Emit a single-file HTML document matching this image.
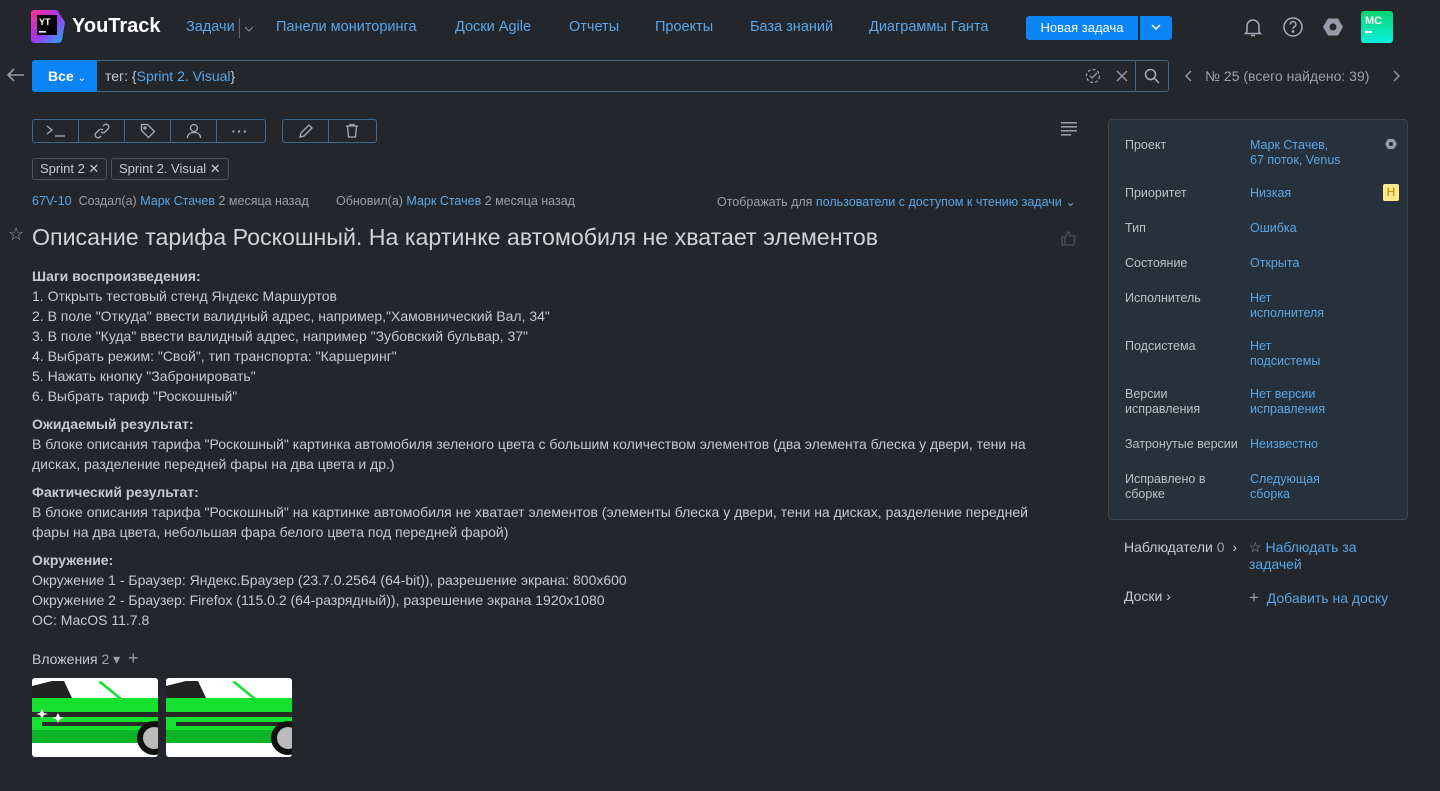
<!DOCTYPE html>
<html><head><meta charset="utf-8"><style>
*{box-sizing:border-box;margin:0;padding:0}
body{width:1440px;height:791px;background:#23272c;font-family:"Liberation Sans",Arial,sans-serif;color:#c6c9cd;font-size:14px;position:relative;overflow:hidden}
.a{position:absolute;white-space:nowrap}
.l{color:#5aa6e6}
.g{color:#9aa0a7}
.nav{font-size:14.5px;color:#5aa6e6;top:19px}
.btnb{border:1px solid #3f6a8e;height:24px;top:119px;display:flex;border-radius:3px}
.btnb div{width:46px;border-right:1px solid #3f6a8e;display:flex;align-items:center;justify-content:center}
.btnb div:last-child{border-right:none}
.tag{top:158px;height:22px;border:1px solid #4a525b;border-radius:3px;font-size:13px;padding:2px 7px;color:#c6c9cd}
.desc{left:32px;top:266px;font-size:14px;line-height:20px;color:#c6c9cd;white-space:normal;width:1042px}
.desc b{font-weight:bold;color:#c6c9cd}
.desc p{margin-bottom:6px}
.panel{left:1108px;top:119px;width:300px;height:401px;background:#26313b;border:1px solid #3a4652;border-radius:4px}
.fl{left:1125px;font-size:12.5px;color:#bcc0c4;line-height:15px}
.fv{left:1250px;font-size:12.5px;color:#5aa6e6;line-height:15px}
</style></head><body>
<svg class="a" style="left:31px;top:10px" width="34" height="33" viewBox="0 0 34 33">
<defs><linearGradient id="lg" x1="0" y1="0" x2="1" y2="1"><stop offset="0" stop-color="#ff318c"/><stop offset=".5" stop-color="#a435f0"/><stop offset="1" stop-color="#17b4f5"/></linearGradient></defs>
<path d="M0 3Q0 0 4 0h22l8 12-3 18q-1 3-4 3H4q-4 0-4-4z" fill="url(#lg)"/>
<rect x="6" y="5" width="20" height="20" fill="#000"/>
<text x="8" y="15" fill="#fff" font-size="9" font-family="Liberation Sans" font-weight="bold">YT</text>
<rect x="8" y="21" width="7" height="1.6" fill="#fff"/>
</svg>
<div class="a" style="left:72px;top:15px;font-size:20px;font-weight:bold;color:#fff">YouTrack</div>
<div class="a nav" style="left:186px">Задачи</div>
<div class="a" style="left:239px;top:18px;width:1px;height:20px;background:#667"></div>
<svg class="a" style="left:244px;top:26px" width="10" height="6"><path d="M1 1l4 4 4-4" stroke="#889" fill="none"/></svg>
<div class="a nav" style="left:276px">Панели мониторинга</div>
<div class="a nav" style="left:455px">Доски Agile</div>
<div class="a nav" style="left:569px">Отчеты</div>
<div class="a nav" style="left:655px">Проекты</div>
<div class="a nav" style="left:750px">База знаний</div>
<div class="a nav" style="left:869px">Диаграммы Ганта</div>
<div class="a" style="left:1026px;top:16px;width:112px;height:24px;background:#0b84f5;border-radius:3px 0 0 3px;color:#fff;font-size:13px;text-align:center;line-height:24px">Новая задача</div>
<div class="a" style="left:1140px;top:16px;width:32px;height:24px;background:#0b84f5;border-radius:0 3px 3px 0"></div>
<svg class="a" style="left:1151px;top:24px" width="10" height="6"><path d="M1 1l4 4 4-4" stroke="#fff" stroke-width="1.5" fill="none"/></svg>
<svg class="a" style="left:1242px;top:16px" width="22" height="22" viewBox="0 0 22 22" fill="none" stroke="#aab" stroke-width="1.5"><path d="M5 16V10a6 6 0 0112 0v6l1.5 1.5h-15z"/><path d="M9 19.5h4"/></svg>
<svg class="a" style="left:1282px;top:16px" width="22" height="22" viewBox="0 0 22 22" fill="none" stroke="#aab" stroke-width="1.5"><circle cx="11" cy="11" r="9"/><path d="M8.3 8.5a2.8 2.8 0 115 1.6c-1 .8-2.3 1.3-2.3 2.8"/><circle cx="11" cy="15.5" r=".6" fill="#aab"/></svg>
<svg class="a" style="left:1322px;top:16px" width="22" height="22" viewBox="0 0 22 22"><path d="M6 2.5h10l5 8.5-5 8.5H6L1 11z" fill="#99a"/><circle cx="11" cy="11" r="3.5" fill="#23272c"/></svg>
<div class="a" style="left:1361px;top:11px;width:32px;height:32px;border-radius:3px;background:linear-gradient(#0ad56c,#06f0e0);color:#fff;font-size:11px;font-weight:bold;padding:4px 4px">MC<div style="width:7px;height:1.5px;background:#fff;margin-top:4px"></div></div>

<svg class="a" style="left:7px;top:68px" width="18" height="14"><path d="M17 7H2M7 1L1 7l6 6" stroke="#99a" stroke-width="1.6" fill="none"/></svg>
<div class="a" style="left:32px;top:60px;width:1137px;height:32px;border:1px solid #3f6a8e;border-radius:3px"></div>
<div class="a" style="left:32px;top:60px;width:65px;height:32px;background:#0b84f5;border-radius:3px 0 0 3px;color:#fff;font-weight:bold;font-size:14px;line-height:32px;padding-left:16px">Все <span style="font-weight:normal;font-size:10px">⌄</span></div>
<div class="a" style="left:105px;top:68px;font-size:14px;color:#c6c9cd">тег: {<span class="l">Sprint 2. Visual</span>}</div>
<svg class="a" style="left:1085px;top:68px" width="16" height="16" fill="none" stroke="#99a" stroke-width="1.3"><circle cx="8" cy="8" r="6.5" stroke-dasharray="3 2"/><path d="M5 8l2 2 5-5"/></svg>
<svg class="a" style="left:1116px;top:70px" width="12" height="12" stroke="#99a" stroke-width="1.4"><path d="M1 1l10 10M11 1L1 11"/></svg>
<div class="a" style="left:1135px;top:61px;width:1px;height:30px;background:#3f6a8e"></div>
<svg class="a" style="left:1144px;top:68px" width="16" height="16" fill="none" stroke="#aab" stroke-width="1.5"><circle cx="6.5" cy="6.5" r="5"/><path d="M10 10l5 5"/></svg>
<svg class="a" style="left:1185px;top:70px" width="8" height="12"><path d="M6 1L1 6l5 5" stroke="#99a" stroke-width="1.4" fill="none"/></svg>
<div class="a g" style="left:1205px;top:68px;font-size:14px">№ 25 (всего найдено: 39)</div>
<svg class="a" style="left:1392px;top:70px" width="8" height="12"><path d="M2 1l5 5-5 5" stroke="#99a" stroke-width="1.4" fill="none"/></svg>

<div class="a btnb" style="left:32px;width:234px">
<div><svg width="20" height="12" stroke="#aab" fill="none" stroke-width="1.3"><path d="M1 1l5 4-5 4M9 11h10"/></svg></div>
<div><svg width="16" height="16" stroke="#aab" fill="none" stroke-width="1.3"><path d="M7 9a3 3 0 004 0l3-3a2.5 2.5 0 00-4-4l-1 1M9 7a3 3 0 00-4 0l-3 3a2.5 2.5 0 004 4l1-1"/></svg></div>
<div><svg width="16" height="16" stroke="#aab" fill="none" stroke-width="1.3"><path d="M1.5 1.5h6l7 7-6 6-7-7z"/><circle cx="5" cy="5" r="1"/></svg></div>
<div><svg width="16" height="16" stroke="#aab" fill="none" stroke-width="1.3"><circle cx="8" cy="5" r="3.5"/><path d="M1.5 15c0-4 3-5.5 6.5-5.5s6.5 1.5 6.5 5.5"/></svg></div>
<div style="color:#aab;font-size:14px;letter-spacing:1px;font-weight:bold">···</div>
</div>
<div class="a btnb" style="left:282px;width:95px">
<div><svg width="16" height="16" stroke="#aab" fill="none" stroke-width="1.3"><path d="M2 14l1-4 8-8 3 3-8 8z"/></svg></div>
<div><svg width="16" height="16" stroke="#aab" fill="none" stroke-width="1.3"><path d="M2 3h12M6 3V1.5h4V3M3.5 3l1 11h7l1-11"/></svg></div>
</div>
<svg class="a" style="left:1061px;top:122px" width="16" height="14" fill="#99a"><rect y="0" width="16" height="1.6"/><rect y="4" width="16" height="1.6"/><rect y="8" width="16" height="1.6"/><rect y="12" width="10" height="1.6"/></svg>
<div class="a tag" style="left:32px">Sprint 2 ✕</div>
<div class="a tag" style="left:111px">Sprint 2. Visual ✕</div>

<div class="a" style="left:32px;top:194px;font-size:12.5px"><span class="l">67V-10</span>&nbsp; <span class="g">Создал(а)</span> <span class="l">Марк Стачев</span> <span class="g">2 месяца назад</span></div>
<div class="a" style="left:336px;top:194px;font-size:12.5px"><span class="g">Обновил(а)</span> <span class="l">Марк Стачев</span> <span class="g">2 месяца назад</span></div>
<div class="a" style="left:717px;top:194px;font-size:12.5px"><span class="g">Отображать для</span> <span class="l">пользователи с доступом к чтению задачи ⌄</span></div>

<div class="a" style="left:8px;top:224px;font-size:18px;color:#99a">☆</div>
<div class="a" style="left:32px;top:224px;font-size:23.2px;color:#d0d3d6">Описание тарифа Роскошный. На картинке автомобиля не хватает элементов</div>
<svg class="a" style="left:1061px;top:230px" width="16" height="16" fill="none" stroke="#4a5058" stroke-width="1.3"><path d="M1 7h3v8H1zM4 8l3-6c2 0 2 2 1.5 4H14l-1 9H4"/></svg>

<div class="a desc">
<p><b>Шаги воспроизведения:</b><br>1. Открыть тестовый стенд Яндекс Маршуртов<br>2. В поле "Откуда" ввести валидный адрес, например,"Хамовнический Вал, 34"<br>3. В поле "Куда" ввести валидный адрес, например "Зубовский бульвар, 37"<br>4. Выбрать режим: "Свой", тип транспорта: "Каршеринг"<br>5. Нажать кнопку "Забронировать"<br>6. Выбрать тариф "Роскошный"</p>
<p style="margin-top:8px"><b>Ожидаемый результат:</b><br>В блоке описания тарифа "Роскошный" картинка автомобиля зеленого цвета с большим количеством элементов (два элемента блеска у двери, тени на<br>дисках, разделение передней фары на два цвета и др.)</p>
<p style="margin-top:8px"><b>Фактический результат:</b><br>В блоке описания тарифа "Роскошный" на картинке автомобиля не хватает элементов (элементы блеска у двери, тени на дисках, разделение передней<br>фары на два цвета, небольшая фара белого цвета под передней фарой)</p>
<p style="margin-top:8px"><b>Окружение:</b><br>Окружение 1 - Браузер: Яндекс.Браузер (23.7.0.2564 (64-bit)), разрешение экрана: 800x600<br>Окружение 2 - Браузер: Firefox (115.0.2 (64-разрядный)), разрешение экрана 1920x1080<br>ОС: MacOS 11.7.8</p>
</div>

<div class="a" style="left:32px;top:648px;font-size:14px;color:#c6c9cd">Вложения <span class="g">2 ▾</span> &nbsp;<span style="color:#99a;font-size:18px">+</span></div>
<svg class="a" style="left:32px;top:678px" width="126" height="79" viewBox="0 0 126 79">
<rect width="126" height="79" rx="3" fill="#fff"/>
<rect x="0" y="20" width="126" height="45" fill="#13e02f"/>
<rect x="0" y="52" width="126" height="13" fill="#0cb526"/>
<path d="M0 8l20-5h12l8 17H0z" fill="#222"/>
<path d="M66 4l3-1 22 18h-4z" fill="#13e02f"/>
<rect x="0" y="34" width="126" height="5" fill="#2a2a2a"/><rect x="10" y="44" width="116" height="4" fill="#2a2a2a"/>
<circle cx="122" cy="60" r="17" fill="#111"/><circle cx="122" cy="60" r="11" fill="#bbb"/>
<path d="M10 31l2 4 4 1-4 1-2 4-2-4-4-1 4-1zM26 35l2 4 4 1-4 1-2 4-2-4-4-1 4-1z" fill="#fff"/>
</svg>
<svg class="a" style="left:166px;top:678px" width="126" height="79" viewBox="0 0 126 79">
<rect width="126" height="79" rx="3" fill="#fff"/>
<rect x="0" y="20" width="126" height="45" fill="#13e02f"/>
<rect x="0" y="52" width="126" height="13" fill="#0cb526"/>
<path d="M0 8l20-5h12l8 17H0z" fill="#222"/>
<path d="M66 4l3-1 22 18h-4z" fill="#13e02f"/>
<rect x="0" y="34" width="126" height="5" fill="#2a2a2a"/><rect x="10" y="44" width="116" height="4" fill="#2a2a2a"/>
<circle cx="122" cy="60" r="17" fill="#111"/><circle cx="122" cy="60" r="11" fill="#bbb"/>
</svg>

<div class="a panel"></div>
<div class="a fl" style="top:138px">Проект</div><div class="a fv" style="top:138px">Марк Стачев,<br>67 поток, Venus</div>
<svg class="a" style="left:1385px;top:138px" width="12" height="12"><path d="M3 1h6l3 5-3 5H3L0 6z" fill="#99a"/><circle cx="6" cy="6" r="2" fill="#26313b"/></svg>
<div class="a fl" style="top:186px">Приоритет</div><div class="a fv" style="top:186px">Низкая</div>
<div class="a" style="left:1383px;top:184px;width:16px;height:17px;background:#ffe98a;border-radius:2px;color:#c77b00;font-size:12px;text-align:center;line-height:17px">Н</div>
<div class="a fl" style="top:221px">Тип</div><div class="a fv" style="top:221px">Ошибка</div>
<div class="a fl" style="top:256px">Состояние</div><div class="a fv" style="top:256px">Открыта</div>
<div class="a fl" style="top:291px">Исполнитель</div><div class="a fv" style="top:291px">Нет<br>исполнителя</div>
<div class="a fl" style="top:339px">Подсистема</div><div class="a fv" style="top:339px">Нет<br>подсистемы</div>
<div class="a fl" style="top:387px">Версии<br>исправления</div><div class="a fv" style="top:387px">Нет версии<br>исправления</div>
<div class="a fl" style="top:437px">Затронутые версии</div><div class="a fv" style="top:437px">Неизвестно</div>
<div class="a fl" style="top:472px">Исправлено в<br>сборке</div><div class="a fv" style="top:472px">Следующая<br>сборка</div>

<div class="a" style="left:1124px;top:539px;font-size:14px;color:#c6c9cd">Наблюдатели <span class="g">0</span> &nbsp;›</div>
<div class="a" style="left:1249px;top:539px;font-size:14px;line-height:17px"><span class="g">☆</span> <span class="l">Наблюдать за<br>задачей</span></div>
<div class="a" style="left:1124px;top:588px;font-size:14px;color:#c6c9cd">Доски ›</div>
<div class="a" style="left:1249px;top:588px;font-size:14px"><span class="g" style="font-size:17px">+</span>&nbsp; <span class="l">Добавить на доску</span></div>
</body></html>
